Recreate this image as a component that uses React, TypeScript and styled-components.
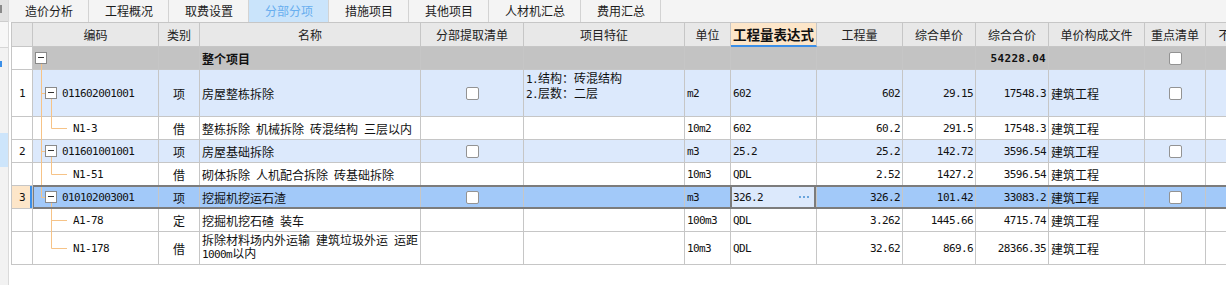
import React from "react";
import styled, { createGlobalStyle, css } from "styled-components";

const colors = {
  line: "#c6c6c6",
  tree: "#f6c387",
  head: "#e8e8e8",
  peach: "#fde6c9",
  root: "#c3c3c3",
  item: "#dce9fc",
  selected: "#a2c9f9",
  blue: "#3b8fe8",
  frame: "#7c7c7c",
};

const GlobalStyle = createGlobalStyle`
  html, body {
    margin: 0;
    padding: 0;
    background: #fff;
  }
  body {
    font-family: "Noto Sans CJK SC", "Noto Sans", sans-serif;
    font-size: 12px;
    color: #111;
  }
`;

const Page = styled.div`
  display: flex;
  width: 1226px;
  height: 285px;
  overflow: hidden;
  background: #fff;
`;

/* cut-off side panel on the far left */
const SidePanel = styled.div`
  flex: 0 0 8px;
  display: flex;
  flex-direction: column;
  background: #f2f2f2;
  border-right: 1px solid #dadada;
`;

const SideHead = styled.div`
  height: 22px;
  padding-top: 5px;
  box-sizing: border-box;
  background: #e2e2e2;
  border-bottom: 1px solid #cdcdcd;
`;

const SideTool = styled.div`
  height: 25px;
  background: #f7f7f7;
  border-bottom: 1px solid #d6d6d6;
`;

const SideMark = styled.div<{ $color: string; $h: number; $top: number }>`
  width: 2px;
  height: ${(p) => p.$h}px;
  margin-top: ${(p) => p.$top}px;
  background: ${(p) => p.$color};
`;

const SideItem = styled.div`
  height: 34px;
  margin-top: 66px;
  background: #cde5fb;
`;

const Main = styled.div`
  flex: 1;
  min-width: 0;
  display: flex;
  flex-direction: column;
`;

const TabBar = styled.div`
  display: flex;
  height: 22px;
  background: #f4f4f4;
`;

const Tab = styled.div<{ $active?: boolean }>`
  padding: 0 15px 0 16px;
  line-height: 22px;
  border-right: 1px solid #d3d3d3;
  color: ${(p) => (p.$active ? "#68aeef" : "#1c1c1c")};
  background: ${(p) => (p.$active ? "#cae4fb" : "transparent")};
  white-space: nowrap;
`;

const Grid = styled.div`
  margin-left: 2px;
  width: max-content;
  border-top: 1px solid ${colors.line};
  border-left: 1px solid ${colors.line};
`;

const HeadRow = styled.div`
  display: flex;
  height: 24px;
`;

const HeadCell = styled.div<{ $w: number; $active?: boolean }>`
  flex: none;
  width: ${(p) => p.$w}px;
  box-sizing: border-box;
  display: flex;
  align-items: center;
  justify-content: center;
  background: ${colors.head};
  border-right: 1px solid ${colors.line};
  border-bottom: 1px solid ${colors.line};
  color: #222;
  white-space: nowrap;
  overflow: hidden;
  ${(p) =>
    p.$active &&
    css`
      background: ${colors.peach};
      border-bottom: 2px solid ${colors.blue};
      font-weight: 700;
      font-size: 13.5px;
      color: #111;
    `}
`;

type Tone = "root" | "item" | "sub" | "selected";

const toneBg: Record<Tone, string> = {
  root: colors.root,
  item: colors.item,
  sub: "#fff",
  selected: colors.selected,
};

const Row = styled.div<{ $h: number }>`
  display: flex;
  height: ${(p) => p.$h}px;
`;

const NumCell = styled.div<{ $current?: boolean }>`
  flex: none;
  width: 21px;
  box-sizing: border-box;
  display: flex;
  align-items: center;
  justify-content: center;
  background: #fff;
  border-right: 1px solid ${colors.line};
  border-bottom: 1px solid ${colors.line};
  ${(p) =>
    p.$current &&
    css`
      background: ${colors.peach};
      font-weight: 700;
      box-shadow: inset -2px 0 0 ${colors.blue};
    `}
`;

const RowCells = styled.div<{ $tone: Tone }>`
  display: flex;
  position: relative;
  background: ${(p) => toneBg[p.$tone]};
  ${(p) =>
    p.$tone === "selected" &&
    css`
      &::after {
        content: "";
        position: absolute;
        left: 0;
        right: 0;
        top: -1px;
        bottom: 0;
        border-top: 2px solid ${colors.frame};
        border-bottom: 2px solid ${colors.frame};
        border-left: 1px solid ${colors.frame};
        pointer-events: none;
      }
    `}
`;

const Cell = styled.div<{
  $w: number;
  $align?: "left" | "center" | "right";
  $top?: boolean;
  $focus?: boolean;
}>`
  flex: none;
  position: relative;
  width: ${(p) => p.$w}px;
  box-sizing: border-box;
  display: flex;
  align-items: ${(p) => (p.$top ? "flex-start" : "center")};
  justify-content: ${(p) =>
    p.$align === "center" ? "center" : p.$align === "right" ? "flex-end" : "flex-start"};
  padding: ${(p) => (p.$top ? "1px 2px 0" : "0 2px")};
  border-right: 1px solid ${colors.line};
  border-bottom: 1px solid ${colors.line};
  line-height: 13px;
  white-space: nowrap;
  overflow: hidden;
  ${(p) =>
    p.$focus &&
    css`
      justify-content: space-between;
      padding-right: 6px;
      background: ${colors.item};
      overflow: visible;
      &::after {
        content: "";
        position: absolute;
        left: -1px;
        right: 0;
        top: -1px;
        bottom: 0;
        border-left: 2px solid ${colors.frame};
        border-right: 2px solid ${colors.frame};
        pointer-events: none;
      }
    `}
`;

const CodeCell = styled(Cell)<{ $indent: number }>`
  padding-left: ${(p) => p.$indent}px;
  overflow: visible;
`;

const CellText = styled.div<{ $bold?: boolean }>`
  word-spacing: 3.3px;
  line-height: 13px;
  font-weight: ${(p) => (p.$bold ? 700 : 400)};
  white-space: nowrap;
`;

const Num = styled.span<{ $bold?: boolean }>`
  font-family: "DejaVu Sans Mono", "Liberation Mono", monospace;
  font-size: 11px;
  letter-spacing: ${(p) => (p.$bold ? "0.3px" : "-0.6px")};
  font-weight: ${(p) => (p.$bold ? 700 : 400)};
  word-spacing: 0;
`;

const Toggle = styled.span`
  position: relative;
  z-index: 1;
  flex: none;
  width: 12px;
  height: 12px;
  box-sizing: border-box;
  margin-right: 5px;
  border: 1px solid #8a8a8a;
  background: #fff;

  &::after {
    content: "";
    position: absolute;
    left: 2px;
    right: 2px;
    top: 4px;
    height: 1px;
    background: #333;
  }
`;

const Check = styled.span`
  display: block;
  width: 13px;
  height: 13px;
  box-sizing: border-box;
  border: 1px solid #939393;
  border-radius: 2px;
  background: #fff;
`;

const TreeSvg = styled.svg`
  position: absolute;
  left: 0;
  top: 0;
`;

type Seg = "none" | "full" | "top" | "bottom";

type Tree = {
  l0?: Seg;
  l1?: Seg;
  box?: 0 | 1;
  branch?: "box" | "leaf";
};

const TreeLines = ({ tree, h }: { tree: Tree; h: number }) => {
  const cy = Math.floor((h - 1) / 2) + 0.5;
  const seg = (x: number, s: Seg | undefined, k: string) => {
    if (!s || s === "none") return null;
    const y1 = s === "bottom" ? cy : 0;
    const y2 = s === "top" ? cy : h;
    return <line key={k} x1={x} x2={x} y1={y1} y2={y2} />;
  };
  return (
    <TreeSvg width={40} height={h} stroke={colors.tree} strokeWidth={1}>
      {seg(8.5, tree.l0, "l0")}
      {seg(18.5, tree.l1, "l1")}
      {tree.branch === "box" && <line x1={8.5} x2={12} y1={cy} y2={cy} />}
      {tree.branch === "leaf" && <line x1={18.5} x2={34} y1={cy} y2={cy} />}
    </TreeSvg>
  );
};

const Dots = () => (
  <svg width={11} height={3} fill="#6aa5dc">
    <rect x={0} y={0} width={2} height={2} />
    <rect x={4} y={0} width={2} height={2} />
    <rect x={8} y={0} width={2} height={2} />
  </svg>
);

const cols = [
  { key: "code", title: "编码", w: 126 },
  { key: "kind", title: "类别", w: 41 },
  { key: "name", title: "名称", w: 221 },
  { key: "pick", title: "分部提取清单", w: 103 },
  { key: "feat", title: "项目特征", w: 161 },
  { key: "unit", title: "单位", w: 46 },
  { key: "expr", title: "工程量表达式", w: 86 },
  { key: "qty", title: "工程量", w: 86 },
  { key: "price", title: "综合单价", w: 73 },
  { key: "total", title: "综合合价", w: 73 },
  { key: "file", title: "单价构成文件", w: 96 },
  { key: "keyItem", title: "重点清单", w: 61 },
  { key: "extra", title: "不可竞争费", w: 86 },
];
const W = Object.fromEntries(cols.map((c) => [c.key, c.w])) as Record<string, number>;

type Line = {
  no: string;
  h: number;
  tone: Tone;
  tree: Tree;
  code?: string;
  kind?: string;
  name: React.ReactNode;
  boldName?: boolean;
  pick?: boolean;
  feat?: React.ReactNode;
  unit?: string;
  expr?: string;
  qty?: string;
  price?: string;
  total?: string;
  boldTotal?: boolean;
  file?: string;
  keyItem?: boolean;
};

const rows: Line[] = [
  {
    no: "",
    h: 23,
    tone: "root",
    tree: { box: 0, l0: "bottom" },
    name: "整个项目",
    boldName: true,
    total: "54228.04",
    boldTotal: true,
    keyItem: true,
  },
  {
    no: "1",
    h: 47,
    tone: "item",
    tree: { l0: "full", branch: "box", box: 1, l1: "bottom" },
    code: "011602001001",
    kind: "项",
    name: "房屋整栋拆除",
    pick: true,
    feat: (
      <>
        <Num>1.</Num>结构：砖混结构
        <br />
        <Num>2.</Num>层数：二层
      </>
    ),
    unit: "m2",
    expr: "602",
    qty: "602",
    price: "29.15",
    total: "17548.3",
    file: "建筑工程",
    keyItem: true,
  },
  {
    no: "",
    h: 23,
    tone: "sub",
    tree: { l0: "full", l1: "top", branch: "leaf" },
    code: "N1-3",
    kind: "借",
    name: "整栋拆除 机械拆除 砖混结构 三层以内",
    unit: "10m2",
    expr: "602",
    qty: "60.2",
    price: "291.5",
    total: "17548.3",
    file: "建筑工程",
  },
  {
    no: "2",
    h: 23,
    tone: "item",
    tree: { l0: "full", branch: "box", box: 1, l1: "bottom" },
    code: "011601001001",
    kind: "项",
    name: "房屋基础拆除",
    pick: true,
    unit: "m3",
    expr: "25.2",
    qty: "25.2",
    price: "142.72",
    total: "3596.54",
    file: "建筑工程",
    keyItem: true,
  },
  {
    no: "",
    h: 23,
    tone: "sub",
    tree: { l0: "full", l1: "top", branch: "leaf" },
    code: "N1-51",
    kind: "借",
    name: "砌体拆除 人机配合拆除 砖基础拆除",
    unit: "10m3",
    expr: "QDL",
    qty: "2.52",
    price: "1427.2",
    total: "3596.54",
    file: "建筑工程",
  },
  {
    no: "3",
    h: 23,
    tone: "selected",
    tree: { l0: "top", branch: "box", box: 1, l1: "bottom" },
    code: "010102003001",
    kind: "项",
    name: "挖掘机挖运石渣",
    pick: true,
    unit: "m3",
    expr: "326.2",
    qty: "326.2",
    price: "101.42",
    total: "33083.2",
    file: "建筑工程",
    keyItem: true,
  },
  {
    no: "",
    h: 23,
    tone: "sub",
    tree: { l1: "full", branch: "leaf" },
    code: "A1-78",
    kind: "定",
    name: "挖掘机挖石碴 装车",
    unit: "100m3",
    expr: "QDL",
    qty: "3.262",
    price: "1445.66",
    total: "4715.74",
    file: "建筑工程",
  },
  {
    no: "",
    h: 33,
    tone: "sub",
    tree: { l1: "top", branch: "leaf" },
    code: "N1-178",
    kind: "借",
    name: (
      <>
        拆除材料场内外运输 建筑垃圾外运 运距
        <br />
        <Num>1000m</Num>以内
      </>
    ),
    unit: "10m3",
    expr: "QDL",
    qty: "32.62",
    price: "869.6",
    total: "28366.35",
    file: "建筑工程",
  },
];

const tabs = ["造价分析", "工程概况", "取费设置", "分部分项", "措施项目", "其他项目", "人材机汇总", "费用汇总"];

const indentFor = (tree: Tree) => (tree.box === 0 ? 2 : tree.box === 1 ? 12 : 40);

const BodyRow = ({ r }: { r: Line }) => {
  const multi = r.h > 23;
  const current = r.tone === "selected";
  return (
    <Row $h={r.h}>
      <NumCell $current={current}>
        <Num>{r.no}</Num>
      </NumCell>
      <RowCells $tone={r.tone}>
        <CodeCell $w={W.code} $indent={indentFor(r.tree)}>
          <TreeLines tree={r.tree} h={r.h} />
          {r.tree.box !== undefined && <Toggle />}
          {r.code && <Num>{r.code}</Num>}
        </CodeCell>
        <Cell $w={W.kind} $align="center">
          {r.kind}
        </Cell>
        <Cell $w={W.name} $top={multi && r.tone === "sub"}>
          <CellText $bold={r.boldName}>{r.name}</CellText>
        </Cell>
        <Cell $w={W.pick} $align="center">
          {r.pick && <Check />}
        </Cell>
        <Cell $w={W.feat} $top>
          {r.feat && <CellText>{r.feat}</CellText>}
        </Cell>
        <Cell $w={W.unit}>{r.unit && <Num>{r.unit}</Num>}</Cell>
        <Cell $w={W.expr} $focus={current}>
          {r.expr && <Num>{r.expr}</Num>}
          {current && <Dots />}
        </Cell>
        <Cell $w={W.qty} $align="right">
          {r.qty && <Num>{r.qty}</Num>}
        </Cell>
        <Cell $w={W.price} $align="right">
          {r.price && <Num>{r.price}</Num>}
        </Cell>
        <Cell $w={W.total} $align="right">
          {r.total && <Num $bold={r.boldTotal}>{r.total}</Num>}
        </Cell>
        <Cell $w={W.file}>{r.file}</Cell>
        <Cell $w={W.keyItem} $align="center">
          {r.keyItem && <Check />}
        </Cell>
        <Cell $w={W.extra} />
      </RowCells>
    </Row>
  );
};

export default function App() {
  return (
    <>
      <GlobalStyle />
      <Page>
        <SidePanel>
          <SideHead>
            <SideMark $color="#8a8a8a" $h={8} $top={0} />
          </SideHead>
          <SideTool />
          <SideMark $color={colors.blue} $h={6} $top={13} />
          <SideItem />
        </SidePanel>
        <Main>
          <TabBar>
            {tabs.map((t) => (
              <Tab key={t} $active={t === "分部分项"}>
                {t}
              </Tab>
            ))}
          </TabBar>
          <Grid>
            <HeadRow>
              <HeadCell $w={21} />
              {cols.map((c) => (
                <HeadCell key={c.key} $w={c.w} $active={c.key === "expr"}>
                  {c.title}
                </HeadCell>
              ))}
            </HeadRow>
            {rows.map((r, i) => (
              <BodyRow key={i} r={r} />
            ))}
          </Grid>
        </Main>
      </Page>
    </>
  );
}
